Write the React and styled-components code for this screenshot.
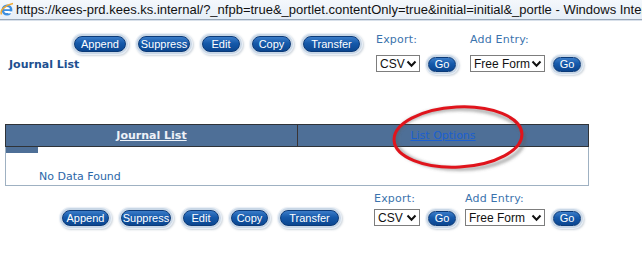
import React from 'react';
import styled, { createGlobalStyle } from 'styled-components';

const GlobalStyle = createGlobalStyle`
  html, body {
    margin: 0;
    padding: 0;
    background: #ffffff;
    width: 642px;
    height: 269px;
    overflow: hidden;
  }
`;

const Window = styled.div`
  position: relative;
  width: 642px;
  height: 269px;
  background: #ffffff;
  font-family: "DejaVu Sans", Verdana, sans-serif;
`;

const TitleBar = styled.div`
  height: 19px;
  display: flex;
  align-items: center;
  gap: 2px;
  background: linear-gradient(#f4f8fc, #e6eef7);
  border-bottom: 1px solid #9aa8b8;
  box-shadow: 0 1px 0 #d8e0ea;
  white-space: nowrap;
  overflow: hidden;

  svg {
    flex-shrink: 0;
  }
`;

const TitleText = styled.span`
  font-family: "Liberation Sans", Arial, sans-serif;
  font-size: 13px;
  color: #111;
`;

const Toolbar = styled.div`
  display: flex;
  align-items: ${(p) => (p.$bottom ? 'flex-end' : 'flex-start')};
  padding-left: ${(p) => p.$left}px;
  margin-top: ${(p) => p.$top}px;
`;

const LeftBlock = styled.div`
  display: flex;
  flex-direction: column;
  width: ${(p) => p.$width}px;
`;

const ButtonRow = styled.div`
  display: flex;
  gap: ${(p) => p.$gap}px;
  padding-left: ${(p) => p.$indent}px;
`;

const PillButton = styled.button`
  box-sizing: border-box;
  height: 16px;
  width: ${(p) => p.$w}px;
  margin: 3px;
  padding: 0;
  border: 1px solid #0b3a78;
  border-radius: 9px;
  background: linear-gradient(#3b7cc8 0%, #1559aa 45%, #0b4690 100%);
  box-shadow: 0 0 0 2px #c9d7e6, 0 0 0 3px #e9eff6, 1px 1px 2px 3px rgba(120, 140, 160, 0.35);
  color: #ffffff;
  font-family: "Liberation Sans", Arial, sans-serif;
  font-size: 11px;
  line-height: 14px;
  text-align: center;
  white-space: nowrap;
`;

const PageTitle = styled.div`
  margin-top: 3px;
  font-weight: bold;
  font-size: 11px;
  color: #1d4f8f;
`;

const FieldGroup = styled.div`
  display: flex;
  flex-direction: column;
  margin-left: ${(p) => p.$ml}px;
`;

const FieldLabel = styled.div`
  font-size: 11px;
  color: #3b73ad;
  height: ${(p) => p.$h}px;
  letter-spacing: 0.2px;
`;

const FieldRow = styled.div`
  display: flex;
  align-items: center;
`;

const FakeSelect = styled.div`
  box-sizing: border-box;
  height: 17px;
  width: ${(p) => p.$w}px;
  border: 1px solid #7d7d7d;
  background: #fff;
  display: flex;
  align-items: center;
  justify-content: space-between;
  padding: 0 2px 0 3px;
  font-family: "Liberation Sans", Arial, sans-serif;
  font-size: 12px;
  color: #111;
  white-space: nowrap;
`;

const GoButton = styled(PillButton)`
  margin-left: ${(p) => p.$ml}px;
  margin-top: 5px;
  height: 15px;
  line-height: 13px;
`;

const Grid = styled.div`
  margin: 0 0 0 5px;
  width: 582px;
  border: 1px solid #9fb1c2;
  border-top: none;
`;

const GridHead = styled.div`
  display: flex;
  height: 21px;
  background: #4e6f97;
  border: 1px solid #2f3338;
  margin: 0 -1px;
`;

const HeadCell = styled.div`
  flex: ${(p) => p.$flex};
  display: flex;
  align-items: center;
  justify-content: center;
  border-left: ${(p) => (p.$divider ? '1px solid #3a3434' : 'none')};
  font-size: 11px;
  font-weight: ${(p) => (p.$bold ? 'bold' : 'normal')};
  color: ${(p) => (p.$link ? '#1b5fd0' : '#eef2f8')};
  text-decoration: underline;
`;

const GridBody = styled.div`
  height: 38px;
`;

const Stub = styled.div`
  width: 32px;
  height: 6px;
  background: #4e6f97;
`;

const EmptyText = styled.div`
  margin: 17px 0 0 33px;
  font-size: 11px;
  color: #2b67a8;
`;

const Marker = styled.svg`
  position: absolute;
  left: 388px;
  top: 102px;
  pointer-events: none;
`;

const Spacer = styled.div`
  height: ${(p) => p.$h}px;
`;

const Chevron = () => (
  <svg width="11" height="8" viewBox="0 0 11 8">
    <path d="M1.5 1.5 L5.5 5.8 L9.5 1.5" fill="none" stroke="#111" strokeWidth="2" />
  </svg>
);

const IeLogo = () => (
  <svg width="14" height="15" viewBox="0 0 13 15">
    <ellipse cx="6.5" cy="8" rx="5.4" ry="5.6" fill="#3d8fe0" />
    <ellipse cx="6.5" cy="8" rx="3" ry="3.1" fill="#ffffff" />
    <rect x="3" y="7.2" width="7" height="1.8" fill="#3d8fe0" />
    <rect x="7.5" y="9.4" width="4" height="2" fill="#ffffff" />
    <path d="M1 12.5 C-1 8 5 3 12.5 1.5" fill="none" stroke="#f0a830" strokeWidth="1.5" />
  </svg>
);

const actions = [
  { label: 'Append', w: 52, ws: 47 },
  { label: 'Suppress', w: 52, ws: 50 },
  { label: 'Edit', w: 38, ws: 36 },
  { label: 'Copy', w: 39, ws: 37 },
  { label: 'Transfer', w: 57, ws: 59 },
];

const ControlGroups = ({ bottom }) => (
  <>
    <FieldGroup $ml={0}>
      <FieldLabel $h={bottom ? 14 : 19}>Export:</FieldLabel>
      <FieldRow>
        <FakeSelect $w={bottom ? 46 : 44}>
          CSV
          <Chevron />
        </FakeSelect>
        <GoButton as="div" $w={28} $ml={8}>Go</GoButton>
      </FieldRow>
    </FieldGroup>
    <FieldGroup $ml={bottom ? 6 : 11}>
      <FieldLabel $h={bottom ? 14 : 19}>Add Entry:</FieldLabel>
      <FieldRow>
        <FakeSelect $w={bottom ? 80 : 75}>
          Free Form
          <Chevron />
        </FakeSelect>
        <GoButton as="div" $w={28} $ml={8}>Go</GoButton>
      </FieldRow>
    </FieldGroup>
  </>
);

const App = () => (
  <Window>
    <GlobalStyle />
    <TitleBar>
      <IeLogo />
      <TitleText>
        https://kees-prd.kees.ks.internal/?_nfpb=true&amp;_portlet.contentOnly=true&amp;initial=initial&amp;_portle - Windows Internet Explorer
      </TitleText>
    </TitleBar>

    <Toolbar $left={9} $top={13}>
      <LeftBlock $width={367}>
        <ButtonRow $indent={62} $gap={6}>
          {actions.map((a) => (
            <PillButton key={a.label} $w={a.w}>{a.label}</PillButton>
          ))}
        </ButtonRow>
        <PageTitle>Journal List</PageTitle>
      </LeftBlock>
      <ControlGroups />
    </Toolbar>

    <Spacer $h={49} />

    <Grid>
      <GridHead>
        <HeadCell $flex="0 0 291px" $bold>Journal List</HeadCell>
        <HeadCell $flex="1" $divider $link>List Options</HeadCell>
      </GridHead>
      <GridBody>
        <Stub />
        <EmptyText>No Data Found</EmptyText>
      </GridBody>
    </Grid>

    <Toolbar $left={59} $top={6} $bottom>
      <LeftBlock $width={315}>
        <ButtonRow $indent={0} $gap={6}>
          {actions.map((a) => (
            <PillButton key={a.label} $w={a.ws}>{a.label}</PillButton>
          ))}
        </ButtonRow>
      </LeftBlock>
      <ControlGroups bottom />
    </Toolbar>

    <Marker width="140" height="72" viewBox="0 0 140 72">
      <defs>
        <filter id="blur" x="-20%" y="-20%" width="140%" height="140%">
          <feGaussianBlur stdDeviation="1.5" />
        </filter>
      </defs>
      <ellipse cx="71" cy="36" rx="64" ry="30" fill="none" stroke="#5a5a5a" strokeOpacity="0.45" strokeWidth="4" filter="url(#blur)" transform="translate(1 1)" />
      <ellipse cx="70" cy="35" rx="64" ry="30" fill="none" stroke="#e0141c" strokeWidth="3" transform="rotate(-3 70 35)" />
    </Marker>
  </Window>
);

export default App;
